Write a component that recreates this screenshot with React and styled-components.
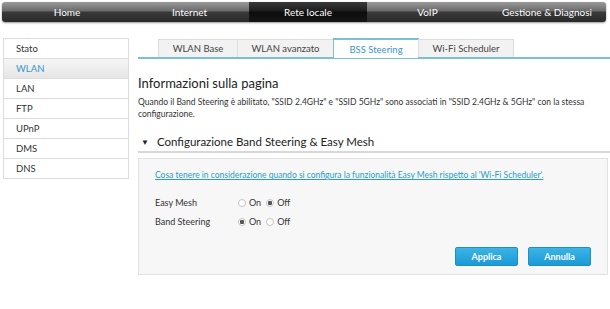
import React, { useState } from "react";
import styled, { createGlobalStyle } from "styled-components";

const GlobalStyle = createGlobalStyle`
  html, body {
    margin: 0;
    padding: 0;
    background: #fff;
    font-family: Lato, "Open Sans", sans-serif;
    color: #333;
  }
`;

const topMenu = ["Home", "Internet", "Rete locale", "VoIP", "Gestione & Diagnosi"];
const sideMenu = ["Stato", "WLAN", "LAN", "FTP", "UPnP", "DMS", "DNS"];
const tabs = [
  { label: "WLAN Base", width: 80 },
  { label: "WLAN avanzato", width: 97 },
  { label: "BSS Steering", width: 86 },
  { label: "Wi-Fi Scheduler", width: 96 },
];

const App = () => {
  const [mesh, setMesh] = useState("off");
  const [steering, setSteering] = useState("on");

  return (
    <Page>
      <GlobalStyle />
      <Nav>
        {topMenu.map((item) => (
          <NavItem key={item} active={item === "Rete locale"}>
            {item}
          </NavItem>
        ))}
      </Nav>
      <Main>
        <Side>
          {sideMenu.map((item) => (
            <SideItem key={item} active={item === "WLAN"}>
              {item}
            </SideItem>
          ))}
        </Side>
        <Content>
          <Tabs>
            {tabs.map((t) => (
              <Tab key={t.label} width={t.width} active={t.label === "BSS Steering"}>
                {t.label}
              </Tab>
            ))}
          </Tabs>
          <Title>Informazioni sulla pagina</Title>
          <Desc>
            Quando il Band Steering è abilitato, "SSID 2.4GHz" e "SSID 5GHz" sono associati in "SSID
            2.4GHz &amp; 5GHz" con la stessa configurazione.
          </Desc>
          <Section>
            <Arrow>▼</Arrow>Configurazione Band Steering &amp; Easy Mesh
          </Section>
          <Panel>
            <Link href="#">
              Cosa tenere in considerazione quando si configura la funzionalità Easy Mesh rispetto al
              'Wi-Fi Scheduler'.
            </Link>
            <Rows>
              <Row>
                <Label>Easy Mesh</Label>
                <Radio checked={mesh === "on"} onClick={() => setMesh("on")}>On</Radio>
                <Radio checked={mesh === "off"} onClick={() => setMesh("off")}>Off</Radio>
              </Row>
              <Row>
                <Label>Band Steering</Label>
                <Radio checked={steering === "on"} onClick={() => setSteering("on")}>On</Radio>
                <Radio checked={steering === "off"} onClick={() => setSteering("off")}>Off</Radio>
              </Row>
            </Rows>
            <Buttons>
              <Button>Applica</Button>
              <Button>Annulla</Button>
            </Buttons>
          </Panel>
        </Content>
      </Main>
    </Page>
  );
};

const Radio = ({ checked, onClick, children }) => (
  <RadioWrap onClick={onClick}>
    <Dot checked={checked} />
    {children}
  </RadioWrap>
);

const Page = styled.div`
  width: 610px;
  height: 309px;
  overflow: hidden;
`;

const Nav = styled.nav`
  margin: 2px 4px 0 2px;
  height: 20px;
  display: grid;
  grid-template-columns: 126px 119px 118px 121px 1fr;
  padding-left: 2px;
  border-radius: 3px;
  background: linear-gradient(#9a9a9a 0%, #6a6a6a 45%, #3a3a3a 50%, #2a2a2a 100%);
  box-shadow: 0 1px 2px rgba(0, 0, 0, 0.4);
  overflow: hidden;
`;

const NavItem = styled.div`
  display: flex;
  align-items: center;
  justify-content: center;
  font-size: 10px;
  color: #fff;
  background: ${(p) =>
    p.active ? "linear-gradient(#3a3a3a 0%, #1c1c1c 45%, #0c0c0c 50%, #151515 100%)" : "transparent"};
`;

const Main = styled.div`
  display: flex;
  align-items: flex-start;
  margin-top: 16px;
`;

const Side = styled.ul`
  list-style: none;
  margin: 0 0 0 3px;
  padding: 0;
  width: 124px;
  border: 1px solid #dcdcdc;
  border-bottom: none;
`;

const SideItem = styled.li`
  height: 19px;
  line-height: 19px;
  padding-left: 12px;
  font-size: 9.5px;
  border-bottom: 1px solid #dcdcdc;
  color: ${(p) => (p.active ? "#3b95c8" : "#333")};
  background: ${(p) => (p.active ? "linear-gradient(#f6f6f6, #e6e6e6)" : "#fff")};
`;

const Content = styled.div`
  margin-left: 9px;
  flex: 1;
`;

const Tabs = styled.div`
  display: flex;
  padding-left: 20px;
  border-bottom: 2px solid #7cc0cf;
  height: 19px;
`;

const Tab = styled.div`
  width: ${(p) => p.width}px;
  height: ${(p) => (p.active ? 20 : 18)}px;
  box-sizing: border-box;
  display: flex;
  align-items: center;
  justify-content: center;
  font-size: 9.5px;
  color: ${(p) => (p.active ? "#3b95c8" : "#444")};
  background: ${(p) => (p.active ? "#fff" : "#f2f2f2")};
  border: 1px solid ${(p) => (p.active ? "#7cc0cf" : "#dcdcdc")};
  border-bottom: none;
  border-top-width: ${(p) => (p.active ? 2 : 1)}px;
  margin-top: ${(p) => (p.active ? 0 : 1)}px;
  margin-right: -1px;
`;

const Title = styled.h1`
  margin: 16px 0 0;
  font-size: 13px;
  font-weight: 400;
  color: #222;
`;

const Desc = styled.p`
  margin: 5px 0 0;
  width: 462px;
  font-size: 8.5px;
  line-height: 12px;
  color: #333;
`;

const Section = styled.h2`
  margin: 15px 0 0;
  padding: 0 0 3px 3px;
  font-size: 11.5px;
  font-weight: 400;
  color: #222;
  border-bottom: 2px solid #d8d8d8;
`;

const Arrow = styled.span`
  font-size: 8px;
  margin-right: 8px;
  vertical-align: 1px;
`;

const Panel = styled.div`
  margin-top: 5px;
  margin-right: 2px;
  height: 117px;
  box-sizing: border-box;
  padding: 10px 16px 0;
  background: #f7f7f7;
  border: 1px solid #e2e2e2;
  display: flex;
  flex-direction: column;
`;

const Link = styled.a`
  font-size: 8.5px;
  line-height: 12px;
  color: #2a9cc8;
  text-decoration: underline;
`;

const Rows = styled.div`
  margin-top: 12px;
  display: flex;
  flex-direction: column;
  flex-shrink: 0;
`;

const Row = styled.div`
  display: flex;
  align-items: center;
  height: 19px;
  flex-shrink: 0;
  font-size: 9px;
  color: #333;
`;

const Label = styled.span`
  width: 83px;
`;

const RadioWrap = styled.label`
  display: flex;
  align-items: center;
  margin-right: 5px;
  cursor: pointer;
`;

const Dot = styled.span`
  width: 8px;
  height: 8px;
  margin-right: 3px;
  border-radius: 50%;
  border: 1px solid #c4c4c4;
  background: ${(p) => (p.checked ? "radial-gradient(circle, #555 0 2px, #fff 2.5px)" : "#fff")};
  box-sizing: border-box;
`;

const Buttons = styled.div`
  display: flex;
  justify-content: flex-end;
  gap: 10px;
  margin-top: 16px;
`;

const Button = styled.button`
  width: 63px;
  height: 19px;
  border: 1px solid #1d8fc4;
  border-radius: 2px;
  background: linear-gradient(#3bb4e6, #1b9ad6);
  color: #fff;
  font-family: Lato, "Open Sans", sans-serif;
  font-size: 9px;
  font-weight: 700;
  padding: 0;
`;

export default App;
